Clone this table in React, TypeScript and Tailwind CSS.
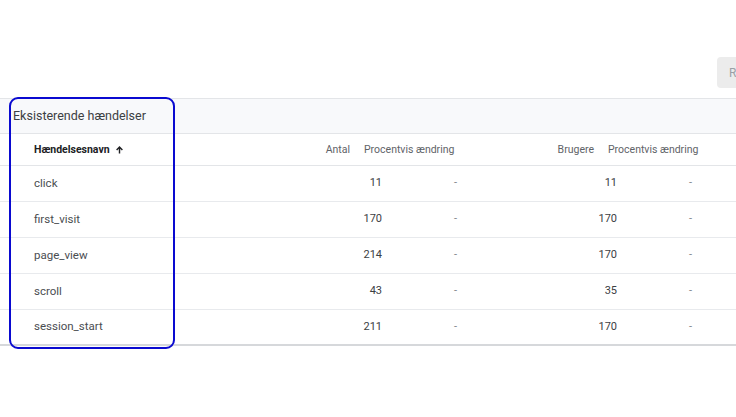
import React from "react";

const rows = [
  { name: "click", antal: "11", brugere: "11" },
  { name: "first_visit", antal: "170", brugere: "170" },
  { name: "page_view", antal: "214", brugere: "170" },
  { name: "scroll", antal: "43", brugere: "35" },
  { name: "session_start", antal: "211", brugere: "170" },
];

export default function App() {
  return (
    <div
      className="relative w-[736px] h-[417px] overflow-hidden bg-white text-[#3c4043]"
      style={{ fontFamily: "Roboto, 'Liberation Sans', Arial, sans-serif" }}
    >
      <div className="pt-[57px] pl-[717px] flex overflow-hidden">
        <div className="shrink-0 w-[80px] h-[31px] rounded-[4px] bg-[#ececec] text-[#9aa0a6] text-[12px] flex items-center pl-[12px]">
          R
        </div>
      </div>
      <div className="mt-[10px] border-t border-[#e3e5e8]">
        <div className="h-[35px] bg-[#f8f9fb] border-b border-[#e3e5e8] flex items-center pl-[13px] text-[12.5px] text-[#3c4043]">
          Eksisterende hændelser
        </div>
        <div className="h-[32px] border-b border-[#e3e5e8] flex items-center text-[10.5px] text-[#5f6368]">
          <div className="w-[300px] pl-[34px] font-bold text-[#202124] flex items-center gap-[5px]">
            <span>Hændelsesnavn</span>
            <svg width="9" height="10" viewBox="0 0 10 10" className="mt-[1px]">
              <path d="M5 9V1.8M1.8 5L5 1.6L8.2 5" stroke="#202124" strokeWidth="1.6" fill="none" />
            </svg>
          </div>
          <div className="w-[50px] text-right">Antal</div>
          <div className="w-[180px] pl-[14px]">Procentvis ændring</div>
          <div className="w-[64px] text-right">Brugere</div>
          <div className="pl-[14px]">Procentvis ændring</div>
        </div>
        {rows.map((r, i) => (
          <div
            key={r.name}
            className={`h-[36px] flex items-center text-[11px] border-b ${
              i === rows.length - 1 ? "border-[#d6d8db] border-b-2" : "border-[#e8eaed]"
            }`}
          >
            <div className="w-[300px] pl-[34px] text-[11.5px] text-[#4a4d51]">{r.name}</div>
            <div className="w-[82px] text-right text-[#3c4043]">{r.antal}</div>
            <div className="w-[148px] pl-[72px] text-[#80868b]">-</div>
            <div className="w-[87px] text-right text-[#3c4043]">{r.brugere}</div>
            <div className="pl-[72px] text-[#80868b]">-</div>
          </div>
        ))}
      </div>
      <div className="absolute left-[9px] top-[97px] w-[166px] h-[252px] border-2 border-[#0a0ad0] rounded-[9px]" />
    </div>
  );
}
